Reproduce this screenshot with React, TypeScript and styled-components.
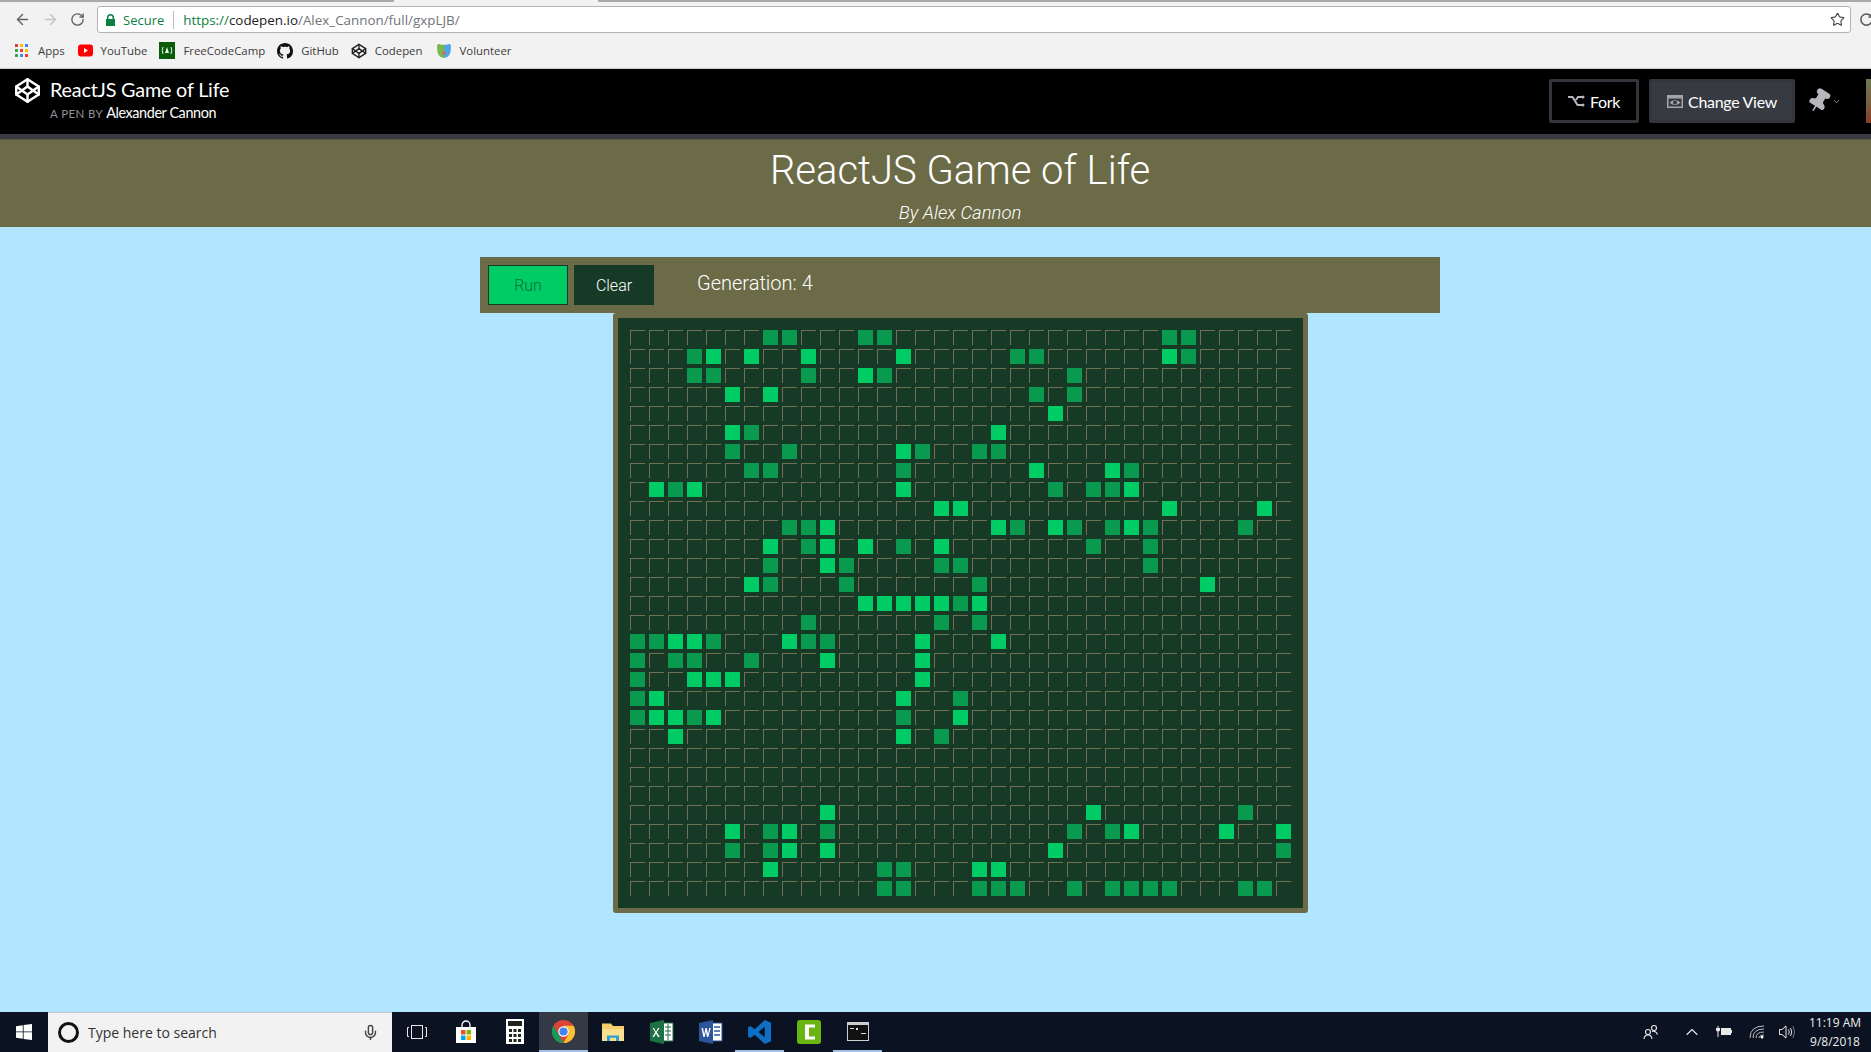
import React from "react";
import styled, { createGlobalStyle } from "styled-components";
import { ArrowLeft, ArrowRight, RotateCw, Star, Codepen, Mic, ChevronDown, ChevronUp, Pin } from "lucide-react";

const Global = createGlobalStyle`
  html, body { margin: 0; padding: 0; height: 100%; overflow: hidden; }
  * { box-sizing: border-box; }
  #root { height: 100%; }
`;

const Page = styled.div`
  width: 1871px; height: 1052px; display: flex; flex-direction: column; overflow: hidden;
  background: #b2e5ff; font-family: "Roboto", sans-serif;
`;

/* ---- browser chrome ---- */
const TabStrip = styled.div`display: flex; height: 2px; background: #f2f2f2;`;
const TabEdge = styled.div<{ $w?: number }>`
  height: 2px; background: #a9a9a9; ${p => (p.$w ? `width:${p.$w}px;` : "flex:1;")}
`;
const TabGap = styled.div`width: 204px; background: #f2f2f2;`;
const BrowserBar = styled.div`
  height: 33px; background: #f2f2f2; display: flex; align-items: center; padding: 2px 0 0 14px;
`;
const NavButton = styled.span<{ $off?: boolean; $w?: number }>`
  width: ${p => p.$w ?? 28}px; flex: none; display: flex; color: ${p => (p.$off ? "#c4c4c4" : "#5f6368")};
`;
const Omnibox = styled.div`
  margin-left: 1px; width: 1754px; flex: none; height: 27px; background: #fff; border: 1px solid #b4b4b4; border-radius: 3px;
  display: flex; align-items: center; padding-left: 8px; font: 13.4px "Open Sans", sans-serif;
`;
const SecureText = styled.span`color: #0b8043; margin-left: 8px; font-size: 13px;`;
const Divider = styled.span`width: 1px; height: 18px; background: #bdbdbd; margin: 0 9px;`;
const UrlHost = styled.span`color: #222;`;
const UrlDim = styled.span`color: #6f7378;`;
const UrlSecure = styled.span`color: #0b8043;`;
const StarWrap = styled.span`margin-left: auto; margin-right: 5px; display: flex; color: #444;`;
const EdgeIcon = styled.span`margin-left: 8px; display: flex; flex: none; color: #555;`;
const Bookmarks = styled.div`
  height: 34px; background: #f2f2f2; border-bottom: 1px solid #c9c9c9; display: flex; align-items: center;
  padding: 0 0 2px 15px;
`;
const Bookmark = styled.span<{ $gap: number }>`
  display: flex; align-items: center; gap: 8px; margin-right: ${p => p.$gap}px;
  font: 11.4px "Open Sans", sans-serif; color: #3c3c3c;
`;
const AppsGrid = styled.span`
  display: grid; grid-template-columns: repeat(3, 3px); grid-auto-rows: 3px; gap: 2px; margin-right: 2px;
`;
const AppsDot = styled.i<{ $c: string }>`background: ${p => p.$c}; display: block;`;

/* ---- pen header ---- */
const PenBar = styled.header`
  height: 70px; background: #000; border-bottom: 5px solid #3a3c44; display: flex;
  align-items: center; padding: 0 0 1px 14px; font-family: "Lato", sans-serif; color: #fff;
`;
const PenLogo = styled.span`display: flex; color: #fff; margin-top: -21px;`;
const PenTitles = styled.div`margin: -3px 0 0 9px; display: flex; flex-direction: column;`;
const PenTitle = styled.div`font-size: 19.8px; line-height: 24px; letter-spacing: -0.2px;`;
const PenBy = styled.div`font-size: 11.5px; line-height: 18px; color: #8f919a; letter-spacing: 0.4px; margin-top: 3px;`;
const PenAuthor = styled.span`font-size: 14.4px; color: #fff; letter-spacing: -0.4px; margin-left: 3px;`;
const PenActions = styled.div`margin-left: auto; display: flex; align-items: center;`;
const PenButton = styled.div<{ $solid?: boolean; $w: number }>`
  width: ${p => p.$w}px; height: 44px; display: flex; align-items: center; justify-content: center; gap: 5px; font-size: 16px;
  letter-spacing: -0.3px; border-radius: 2px; border: 3px solid #33353c; background: ${p => (p.$solid ? "#383a42" : "#000")};
  color: #fff; margin-right: 10px;
`;
const PinWrap = styled.span`display: flex; align-items: center; color: #b5b7bd; margin: 0 25px 0 1px; width: 35px;`;
const PinGlyph = styled.span`display: flex; transform: rotate(32deg);`;
const Avatar = styled.div`width: 5px; height: 44px; background: linear-gradient(#6e7a55, #7d5a3a 60%, #8a3a2a);`;

/* ---- app ---- */
const Banner = styled.div`
  height: 88px; background: #6b6b47; display: flex; flex-direction: column; align-items: center; padding-left: 49px; color: #fff;
  border-top: 1px solid #585a3f;
`;
const Title = styled.h1`
  margin: 7px 0 0; font: 300 40px/48px "Roboto", sans-serif;
`;
const Subtitle = styled.h2`margin: 6px 0 0; font: italic 300 18.5px/24px "Roboto", sans-serif;`;
const Content = styled.main`flex: 1; display: flex; flex-direction: column; align-items: center; padding: 30px 0 0 49px;`;
const Controls = styled.div`
  width: 960px; height: 56px; background: #6b6b47; display: flex; align-items: center; padding-left: 8px; gap: 6px; flex: none;
`;
const ControlButton = styled.button<{ $run?: boolean }>`
  width: 80px; height: 40px; font: 300 16px "Roboto", sans-serif; padding: 0; margin: 0;
  border: 1px solid #173a27; background: ${p => (p.$run ? "#00cc66" : "#173a27")};
  color: ${p => (p.$run ? "#0b6e3c" : "#fff")};
`;
const Generation = styled.span`margin-left: 37px; font: 300 20px "Roboto", sans-serif; color: #fff; margin-top: -4px;`;
const Board = styled.div`
  width: 695px; height: 600px; flex: none; background: #173a27; border: 5px solid #6b6b47; border-radius: 3px; padding: 12px;
  display: grid; grid-template-columns: repeat(35, 15px); grid-auto-rows: 15px; gap: 4px;
`;
const Cell = styled.div<{ $state: "" | "L" | "D" }>`
  ${p =>
    p.$state === "L"
      ? "background:#00cc66;"
      : p.$state === "D"
      ? "background:#099a50;"
      : "border-top:1px solid #6f7054;border-left:1px solid #6f7054;"}
`;

/* ---- taskbar ---- */
const Taskbar = styled.footer`
  height: 40px; background: #0b1322; display: flex; align-items: stretch; color: #fff;
`;
const StartButton = styled.div`width: 48px; display: flex; align-items: center; justify-content: center;`;
const SearchBox = styled.div`
  width: 344px; background: #f2f2f2; border-top: 1px solid #c4c8cc; display: flex; align-items: center; padding: 0 13px 1px 10px;
  color: #333; font: 14px "Open Sans", sans-serif;
`;
const Cortana = styled.span`
  width: 21px; height: 21px; border-radius: 50%; border: 3px solid #111; margin: 0 9px 0 0; flex: none;
`;
const MicWrap = styled.span`margin-left: auto; display: flex; color: #444;`;
const TaskButton = styled.div<{ $active?: boolean; $open?: boolean }>`
  width: 49px; display: flex; align-items: center; justify-content: center; padding-bottom: 1px;
  background: ${p => (p.$active ? "#333a46" : "transparent")};
  box-shadow: ${p => (p.$open || p.$active ? "inset 0 -2px 0 #9fbfe8" : "none")};
`;
const Tray = styled.div`margin-left: auto; display: flex; align-items: center; padding-bottom: 1px;`;
const TrayIcon = styled.span<{ $w: number }>`width: ${p => p.$w}px; display: flex; justify-content: center; color: #e8e8e8;`;
const Clock = styled.div`
  width: 72px; text-align: center; font: 12px/19px "Open Sans", sans-serif; color: #eee; margin-left: 2px;
`;

const ROWS: Record<number, { L?: number[]; D?: number[] }> = {
  0: { D: [7, 8, 12, 13, 28, 29] },
  1: { L: [4, 6, 9, 14, 28], D: [3, 20, 21, 29] },
  2: { L: [12], D: [3, 4, 9, 13, 23] },
  3: { L: [5, 7], D: [21, 23] },
  4: { L: [22] },
  5: { L: [5, 19], D: [6] },
  6: { L: [14], D: [5, 8, 15, 18, 19] },
  7: { L: [21, 25], D: [6, 7, 14, 26] },
  8: { L: [1, 3, 14, 26], D: [2, 22, 24, 25] },
  9: { L: [16, 17, 28, 33] },
  10: { L: [10, 19, 22, 26], D: [8, 9, 20, 23, 25, 27, 32] },
  11: { L: [7, 10, 12, 16], D: [9, 14, 24, 27] },
  12: { L: [10], D: [7, 11, 16, 17, 27] },
  13: { L: [6, 30], D: [7, 11, 18] },
  14: { L: [12, 13, 14, 15, 16, 18], D: [17] },
  15: { D: [9, 16, 18] },
  16: { L: [2, 3, 8, 15, 19], D: [0, 1, 4, 9, 10] },
  17: { L: [10, 15], D: [0, 2, 3, 6] },
  18: { L: [3, 4, 5, 15], D: [0] },
  19: { L: [1, 14], D: [0, 17] },
  20: { L: [1, 2, 4, 17], D: [0, 3, 14] },
  21: { L: [2, 14], D: [16] },
  25: { L: [10, 24], D: [32] },
  26: { L: [5, 8, 26, 31, 34], D: [7, 10, 23, 25] },
  27: { L: [10, 8, 22], D: [5, 7, 34] },
  28: { L: [7, 18, 19], D: [13, 14] },
  29: { D: [13, 14, 18, 19, 20, 23, 25, 26, 27, 28, 32, 33] },
};

const cellState = (r: number, c: number): "" | "L" | "D" => {
  const row = ROWS[r];
  if (!row) return "";
  if (row.L?.includes(c)) return "L";
  if (row.D?.includes(c)) return "D";
  return "";
};

const APP_COLORS = ["#e53935", "#fbbc05", "#4285f4", "#34a853", "#ea4335", "#fbbc05", "#34a853", "#4285f4", "#ea4335"];

const LockIcon = () => (
  <svg width="9" height="12" viewBox="0 0 9 12"><path d="M1 5V3.5a3.5 3.5 0 0 1 7 0V5h1v7H0V5zm1.5 0h4V3.5a2 2 0 0 0-4 0z" fill="#0b8043" /></svg>
);
const YouTubeIcon = () => (
  <svg width="15" height="13" viewBox="0 0 15 13"><rect width="15" height="12" y="0.5" rx="3" fill="#f00" /><path d="M6 4l4 2.5L6 9z" fill="#fff" /></svg>
);
const FccIcon = () => (
  <svg width="16" height="17" viewBox="0 0 16 17">
    <rect width="16" height="17" fill="#0a5c0a" />
    <path d="M4 5q-1.5 3.5 0 7M12 5q1.5 3.5 0 7" stroke="#dfe" fill="none" />
    <path d="M8 5l2 6H6z" fill="#dfe" />
  </svg>
);
const GithubIcon = () => (
  <svg width="16" height="16" viewBox="0 0 16 16"><path fill="#111" d="M8 0C3.58 0 0 3.58 0 8c0 3.54 2.29 6.53 5.47 7.59.4.07.55-.17.55-.38 0-.19-.01-.82-.01-1.49-2.01.37-2.53-.49-2.69-.94-.09-.23-.48-.94-.82-1.13-.28-.15-.68-.52-.01-.53.63-.01 1.08.58 1.23.82.72 1.21 1.87.87 2.33.66.07-.52.28-.87.51-1.07-1.78-.2-3.64-.89-3.64-3.95 0-.87.31-1.59.82-2.15-.08-.2-.36-1.02.08-2.12 0 0 .67-.21 2.2.82.64-.18 1.32-.27 2-.27s1.36.09 2 .27c1.53-1.04 2.2-.82 2.2-.82.44 1.1.16 1.92.08 2.12.51.56.82 1.27.82 2.15 0 3.07-1.87 3.75-3.65 3.95.29.25.54.73.54 1.48 0 1.07-.01 1.93-.01 2.2 0 .21.15.46.55.38A8 8 0 0 0 16 8c0-4.42-3.58-8-8-8z" /></svg>
);
const VolunteerIcon = () => (
  <svg width="16" height="16" viewBox="0 0 16 16">
    <path d="M1 4q0-3 2-3t2 1q1-1 3 0v13Q1 15 1 4z" fill="#7ab648" />
    <path d="M15 4q0-3-2-3t-2 1q-1-1-3 0v13q7 0 7-11z" fill="#4fa8e0" />
    <circle cx="8" cy="10" r="1.7" fill="#e0566a" />
  </svg>
);
const ForkIcon = () => (
  <svg width="17" height="14" viewBox="0 0 17 14" fill="none" stroke="#b5b7bd" strokeWidth="2">
    <path d="M0 3h4.500l5 8H14M8 6l2-3h4" /><circle cx="15" cy="3" r="1.500" fill="#b5b7bd" stroke="none" /><circle cx="15" cy="11" r="1.500" fill="#b5b7bd" stroke="none" />
  </svg>
);
const ViewIcon = () => (
  <svg width="16" height="13" viewBox="0 0 16 13">
    <path fillRule="evenodd" d="M0 0h16v13H0zM1.500 3.500v8h13v-8z" fill="#a3a5ab" />
    <path fillRule="evenodd" d="M2.500 7.500Q8 2.500 13.500 7.500 8 12.500 2.500 7.500zM6 7.500a2 2 0 1 0 4 0 2 2 0 1 0-4 0z" fill="#a3a5ab" />
  </svg>
);
const WindowsIcon = () => (
  <svg width="16" height="16" viewBox="0 0 16 16" fill="#fff"><path d="M0 2.2L6.8 1.2V7.5H0zM7.6 1.1L16 0V7.5H7.6zM0 8.3H6.8V14.7L0 13.8zM7.6 8.3H16V16L7.6 14.9z" /></svg>
);
const TaskViewIcon = () => (
  <svg width="20" height="16" viewBox="0 0 20 16" fill="none" stroke="#e8e8e8"><rect x="4.5" y="1.5" width="11" height="13" /><path d="M2 3.5H.5v9H2M18 3.5h1.5v9H18" /></svg>
);
const StoreIcon = () => (
  <svg width="24" height="24" viewBox="0 0 24 24">
    <path d="M8 7V5a4 4 0 0 1 8 0v2" stroke="#fff" fill="none" strokeWidth="1.3" />
    <rect x="2" y="7" width="20" height="16" fill="#fff" />
    <rect x="7" y="10" width="4.5" height="4.5" fill="#f25022" /><rect x="12.5" y="10" width="4.5" height="4.5" fill="#7fba00" />
    <rect x="7" y="15.5" width="4.5" height="4.5" fill="#00a4ef" /><rect x="12.5" y="15.5" width="4.5" height="4.5" fill="#ffb900" />
  </svg>
);
const CalcIcon = () => (
  <svg width="18" height="25" viewBox="0 0 18 25">
    <rect width="18" height="25" fill="#fff" /><rect x="2" y="2" width="14" height="5" fill="#222" />
    {[0, 1, 2].map(c => [0, 1, 2].map(r => <rect key={`${c}${r}`} x={3 + c * 4.5} y={10 + r * 5} width="3" height="3" fill="#222" />))}
  </svg>
);
const ChromeIcon = () => (
  <svg width="23" height="23" viewBox="0 0 24 24">
    <circle cx="12" cy="12" r="12" fill="#db4437" />
    <path d="M12 24A12 12 0 0 1 1.6 6L7 15.5 12 24z" fill="#0f9d58" />
    <path d="M12 24a12 12 0 0 0 10.4-18H12l5 9z" fill="#fbc02d" />
    <circle cx="12" cy="12" r="5.5" fill="#fff" /><circle cx="12" cy="12" r="4.3" fill="#4285f4" />
  </svg>
);
const FolderIcon = () => (
  <svg width="22" height="19" viewBox="0 0 22 24" preserveAspectRatio="none">
    <path d="M0 2h9l2 3h11v19H0z" fill="#f4cf6b" />
    <rect y="9" width="22" height="15" fill="#fbe08f" />
    <path d="M5 24v-7h12v7h-3v-4H8v4z" fill="#2d9fd8" />
  </svg>
);
const ExcelIcon = () => (
  <svg width="24" height="24" viewBox="0 0 24 24">
    <path d="M13 3h10v18H13z" fill="#fff" stroke="#1e7145" /><path d="M15 7h6M15 11h6M15 15h6M18 4v16" stroke="#1e7145" />
    <path d="M0 3l14-3v24L0 21z" fill="#1e7145" /><path d="M4 8l2 3.8L8 8h1.6l-2.8 4.3L9.800 17H8l-2-3.500L4 17H2.400l2.900-4.700L2.600 8z" fill="#fff" />
  </svg>
);
const WordIcon = () => (
  <svg width="24" height="24" viewBox="0 0 24 24">
    <path d="M13 3h10v18H13z" fill="#fff" stroke="#2b579a" /><path d="M15 7h6M15 11h6M15 15h6" stroke="#2b579a" strokeWidth="1.500" />
    <path d="M0 3l14-3v24L0 21z" fill="#2b579a" /><path d="M2.500 8h1.500l1.200 6 1.300-6h1.200l1.300 6 1.200-6h1.500L9.300 17H8L6.900 11.500 5.700 17H4.400z" fill="#fff" />
  </svg>
);
const VsCodeIcon = () => (
  <svg width="23" height="24" viewBox="0 0 24 26" preserveAspectRatio="none">
    <path d="M17.500 0L24 3v20l-6.500 3L7 16l-4.500 3.500L0 18v-10l2.500-1.500L7 10zM17.500 7L11 13l6.500 6z" fill="#0f6fc6" />
  </svg>
);
const CamtasiaIcon = () => (
  <svg width="24" height="24" viewBox="0 0 24 26" preserveAspectRatio="none">
    <rect width="24" height="26" rx="3" fill="#69b40f" />
    <path d="M18 5H8v16h10v-3h-6V8h6z" fill="#fff" />
  </svg>
);
const CmdIcon = () => (
  <svg width="22" height="19" viewBox="0 0 22 19">
    <rect width="22" height="19" fill="#cfcfcf" /><rect x="1" y="3" width="20" height="15" fill="#111" />
    <path d="M3 6h4v1H3zM9 6h2v2H9zM14 11h5v1h-5z" fill="#ddd" />
  </svg>
);
const PeopleIcon = () => (
  <svg width="16" height="16" viewBox="0 0 16 16" fill="none" stroke="#e8e8e8" strokeWidth="1.100">
    <circle cx="5" cy="8" r="2.500" /><path d="M1 15q.5-4 4-4t4 4" /><circle cx="11" cy="4" r="2.500" /><path d="M9 7.500q4-1 5.500 3" />
  </svg>
);
const BatteryIcon = () => (
  <svg width="16" height="11" viewBox="0 0 16 11" fill="#e8e8e8">
    <path d="M1 0v2H0v2q0 1 1.500 1.500V11h1V5.500Q4 5 4 4V2H3V0H2.500v2h-1V0z" /><rect x="5" y="2" width="10" height="7" /><rect x="15" y="4" width="1" height="3" />
  </svg>
);
const WifiIcon = () => (
  <svg width="16" height="14" viewBox="0 0 16 14" fill="none" stroke="#bdbdbd">
    <path d="M1 13Q1 1 15 1M4 13Q4 4 15 4M7 13Q7 7 15 7M10 13q0-3 5-3" /><circle cx="13" cy="12" r="1.500" fill="#fff" stroke="none" />
  </svg>
);
const SpeakerIcon = () => (
  <svg width="17" height="14" viewBox="0 0 17 14" fill="none" stroke="#e8e8e8">
    <path d="M.5 4.500H3L7 1v12L3 9.500H.5z" /><path d="M9.500 4.500q1.500 2.500 0 5M11.500 3q2.500 4 0 8" /><path d="M14 1q3 6 0 12" stroke="#777" />
  </svg>
);

export default function App() {
  return (
    <Page>
      <Global />
      <TabStrip>
        <TabEdge $w={394} />
        <TabGap />
        <TabEdge />
      </TabStrip>
      <BrowserBar>
        <NavButton><ArrowLeft size={17} strokeWidth={2} /></NavButton>
        <NavButton $off><ArrowRight size={17} strokeWidth={2} /></NavButton>
        <NavButton $w={26}><RotateCw size={15} strokeWidth={2.200} /></NavButton>
        <Omnibox>
          <LockIcon />
          <SecureText>Secure</SecureText>
          <Divider />
          <UrlSecure>https://</UrlSecure>
          <UrlHost>codepen.io</UrlHost>
          <UrlDim>/Alex_Cannon/full/gxpLJB/</UrlDim>
          <StarWrap><Star size={15} strokeWidth={1.800} /></StarWrap>
        </Omnibox>
        <EdgeIcon><RotateCw size={15} strokeWidth={2.400} /></EdgeIcon>
      </BrowserBar>
      <Bookmarks>
        <Bookmark $gap={13}>
          <AppsGrid>{APP_COLORS.map((c, i) => <AppsDot key={i} $c={c} />)}</AppsGrid>
          Apps
        </Bookmark>
        <Bookmark $gap={12}><YouTubeIcon />YouTube</Bookmark>
        <Bookmark $gap={12}><FccIcon />FreeCodeCamp</Bookmark>
        <Bookmark $gap={12}><GithubIcon />GitHub</Bookmark>
        <Bookmark $gap={13}><Codepen size={16} color="#222" />Codepen</Bookmark>
        <Bookmark $gap={0}><VolunteerIcon />Volunteer</Bookmark>
      </Bookmarks>
      <PenBar>
        <PenLogo><Codepen size={27} strokeWidth={2.200} /></PenLogo>
        <PenTitles>
          <PenTitle>ReactJS Game of Life</PenTitle>
          <PenBy>A PEN BY<PenAuthor>Alexander Cannon</PenAuthor></PenBy>
        </PenTitles>
        <PenActions>
          <PenButton $w={90}><ForkIcon />Fork</PenButton>
          <PenButton $w={146} $solid><ViewIcon />Change View</PenButton>
          <PinWrap>
            <PinGlyph><Pin size={26} fill="#b5b7bd" strokeWidth={1.500} /></PinGlyph>
            <ChevronDown size={13} />
          </PinWrap>
          <Avatar />
        </PenActions>
      </PenBar>
      <Banner>
        <Title>ReactJS Game of Life</Title>
        <Subtitle>By Alex Cannon</Subtitle>
      </Banner>
      <Content>
        <Controls>
          <ControlButton $run>Run</ControlButton>
          <ControlButton>Clear</ControlButton>
          <Generation>Generation: 4</Generation>
        </Controls>
        <Board>
          {Array.from({ length: 30 }, (_, r) =>
            Array.from({ length: 35 }, (_, c) => <Cell key={`${r}-${c}`} $state={cellState(r, c)} />)
          )}
        </Board>
      </Content>
      <Taskbar>
        <StartButton><WindowsIcon /></StartButton>
        <SearchBox>
          <Cortana />
          Type here to search
          <MicWrap><Mic size={17} /></MicWrap>
        </SearchBox>
        <TaskButton><TaskViewIcon /></TaskButton>
        <TaskButton><StoreIcon /></TaskButton>
        <TaskButton><CalcIcon /></TaskButton>
        <TaskButton $active><ChromeIcon /></TaskButton>
        <TaskButton><FolderIcon /></TaskButton>
        <TaskButton><ExcelIcon /></TaskButton>
        <TaskButton><WordIcon /></TaskButton>
        <TaskButton $open><VsCodeIcon /></TaskButton>
        <TaskButton><CamtasiaIcon /></TaskButton>
        <TaskButton $open><CmdIcon /></TaskButton>
        <Tray>
          <TrayIcon $w={44}><PeopleIcon /></TrayIcon>
          <TrayIcon $w={38}><ChevronUp size={20} strokeWidth={1.300} /></TrayIcon>
          <TrayIcon $w={26}><BatteryIcon /></TrayIcon>
          <TrayIcon $w={40}><WifiIcon /></TrayIcon>
          <TrayIcon $w={20}><SpeakerIcon /></TrayIcon>
          <Clock>11:19 AM<br />9/8/2018</Clock>
        </Tray>
      </Taskbar>
    </Page>
  );
}
